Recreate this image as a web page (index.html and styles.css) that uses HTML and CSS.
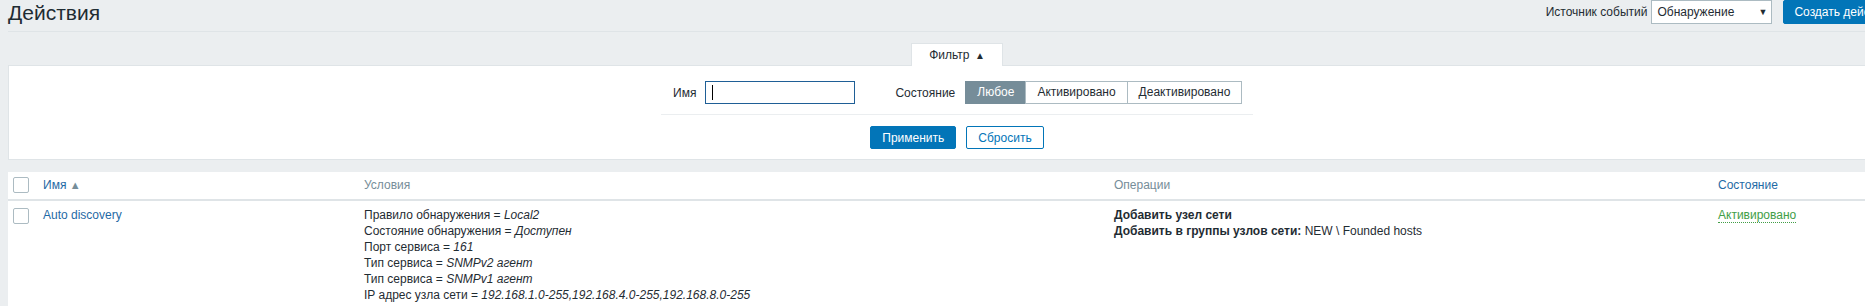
FILE: index.html
```html
<!DOCTYPE html>
<html lang="ru">
<head>
  <meta charset="UTF-8">
  <title>Действия</title>
  <link rel="stylesheet" href="styles.css">
</head>
<body>

<div class="page">

  <header class="header">
    <h1>Действия</h1>
    <div class="header-controls">
      <label>Источник событий</label>
      <div class="select">
        <span>Обнаружение</span>
        <span class="select-arrow">▼</span>
      </div>
      <button class="btn btn-create">Создать действие</button>
    </div>
  </header>

  <div class="filter">
    <div class="filter-tabs">
      <span class="filter-tab">Фильтр <span class="tab-arrow">▲</span></span>
    </div>
    <div class="filter-box">
      <div class="filter-row">
        <label for="name">Имя</label>
        <input id="name" class="text-input" type="text">
        <label class="state-label">Состояние</label>
        <div class="segmented">
          <span class="seg seg-active">Любое</span>
          <span class="seg">Активировано</span>
          <span class="seg">Деактивировано</span>
        </div>
      </div>
      <div class="filter-buttons">
        <button class="btn">Применить</button>
        <button class="btn btn-alt">Сбросить</button>
      </div>
    </div>
  </div>

  <table class="list">
    <colgroup>
      <col class="col-check">
      <col class="col-name">
      <col class="col-cond">
      <col class="col-ops">
      <col>
    </colgroup>
    <thead>
      <tr>
        <th><span class="checkbox"></span></th>
        <th><a class="link">Имя <span class="sort-arrow">▲</span></a></th>
        <th>Условия</th>
        <th>Операции</th>
        <th><a class="link">Состояние</a></th>
      </tr>
    </thead>
    <tbody>
      <tr>
        <td><span class="checkbox"></span></td>
        <td><a class="link">Auto discovery</a></td>
        <td>
          Правило обнаружения = <em>Local2</em><br>
          Состояние обнаружения = <em>Доступен</em><br>
          Порт сервиса = <em>161</em><br>
          Тип сервиса = <em>SNMPv2 агент</em><br>
          Тип сервиса = <em>SNMPv1 агент</em><br>
          IP адрес узла сети = <em>192.168.1.0-255,192.168.4.0-255,192.168.8.0-255</em>
        </td>
        <td>
          <b>Добавить узел сети</b><br>
          <b>Добавить в группы узлов сети:</b> NEW \ Founded hosts
        </td>
        <td><a class="status-on">Активировано</a></td>
      </tr>
    </tbody>
  </table>

</div>

</body>
</html>
```

FILE: styles.css
```css
body {
  margin: 0;
  background: #ebeef0;
  font-family: "Liberation Sans", Arial, sans-serif;
  font-size: 12px;
  color: #1f2c33;
  overflow: hidden;
}
.page {
  width: 1898px;
  margin-left: 8px;
}

/* header */
.header {
  display: flex;
  justify-content: space-between;
  align-items: flex-start;
  height: 31px;
  border-bottom: 1px solid #dfe4e7;
}
.header h1 {
  margin: 0;
  padding-top: 1px;
  font-size: 21px;
  font-weight: normal;
  line-height: 24px;
}
.header-controls {
  display: flex;
  align-items: center;
  height: 24px;
}
.select {
  display: flex;
  justify-content: space-between;
  align-items: center;
  box-sizing: border-box;
  width: 121px;
  height: 24px;
  margin-left: 4px;
  padding: 0 4px 0 5px;
  background: #fff;
  border: 1px solid #acbbc2;
}
.select-arrow {
  font-size: 9px;
}
.btn {
  box-sizing: border-box;
  height: 23px;
  padding: 0 11px;
  font: inherit;
  color: #fff;
  background: #0275b8;
  border: 1px solid #0275b8;
  border-radius: 2px;
}
.btn-create {
  height: 24px;
  margin-left: 11px;
  padding: 0 10px;
}
.btn-alt {
  color: #0275b8;
  background: #fff;
}

/* filter */
.filter {
  margin-top: 11px;
}
.filter-tabs {
  display: flex;
  justify-content: center;
}
.filter-tab {
  position: relative;
  box-sizing: border-box;
  width: 92px;
  height: 23px;
  margin-bottom: -1px;
  line-height: 22px;
  text-align: center;
  background: #fff;
  border: 1px solid #dfe4e7;
  border-bottom: none;
}
.tab-arrow {
  font-size: 10px;
  margin-left: 2px;
}
.filter-box {
  background: #fff;
  border: 1px solid #dfe4e7;
  padding: 15px 0 10px;
}
.filter-row {
  display: flex;
  align-items: center;
  box-sizing: border-box;
  width: 592px;
  margin: 0 auto;
  padding: 0 11px 10px 12px;
  border-bottom: 1px solid #ebeef0;
}
.text-input {
  box-sizing: border-box;
  width: 150px;
  height: 23px;
  margin-left: 9px;
  border: 1px solid #1f5f96;
  background: #fff linear-gradient(#000, #000) no-repeat 6px 3px / 1px 15px;
  outline: none;
}
.state-label {
  margin-left: 40px;
}
.segmented {
  display: flex;
  margin-left: 11px;
}
.seg {
  box-sizing: border-box;
  height: 23px;
  padding: 0 11px;
  line-height: 21px;
  border: 1px solid #acbbc2;
  margin-left: -1px;
}
.seg-active {
  color: #fff;
  background: #768d99;
  border-color: #768d99;
}
.filter-buttons {
  display: flex;
  justify-content: center;
  gap: 10px;
  margin-top: 11px;
}

/* list */
.list {
  width: 100%;
  margin-top: 12px;
  background: #fff;
  border-collapse: collapse;
  table-layout: fixed;
}
.col-check { width: 30px; }
.col-name { width: 321px; }
.col-cond { width: 750px; }
.col-ops { width: 604px; }
.list th {
  padding: 5px 5px 6px;
  line-height: 16px;
  text-align: left;
  font-weight: normal;
  color: #768d99;
  border-bottom: 2px solid #dfe4e7;
}
.list td {
  padding: 6px 5px 8px;
  line-height: 16px;
  vertical-align: top;
}
.list td .checkbox {
  margin-top: 1px;
}
.checkbox {
  display: block;
  box-sizing: border-box;
  width: 16px;
  height: 16px;
  border: 1px solid #acbbc2;
  border-radius: 2px;
  background: #fff;
}
.link {
  color: #1f6aa5;
}
.sort-arrow {
  font-size: 11px;
  color: #768d99;
}
.status-on {
  color: #429e47;
  border-bottom: 1px dotted #429e47;
}
```
